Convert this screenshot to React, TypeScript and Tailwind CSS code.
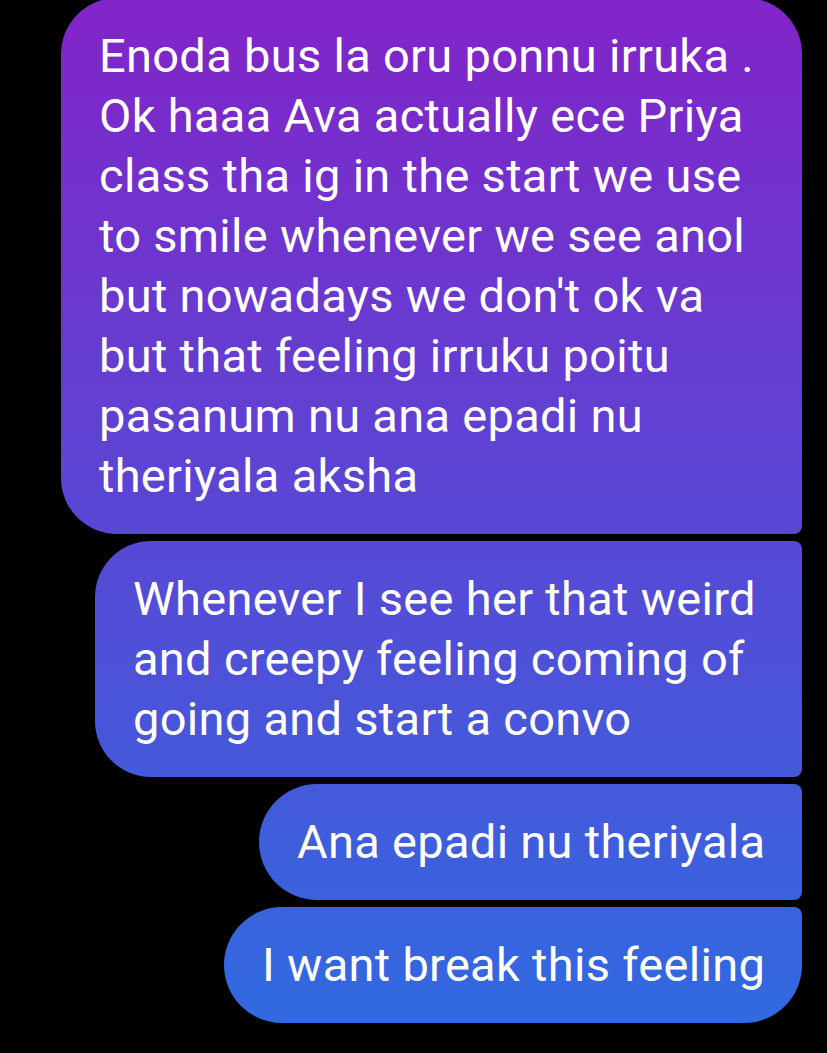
import React from 'react';

interface Bubble {
  lines: string[];
  width: string;
  corners: string;
}

const bubbles: Bubble[] = [
  {
    lines: [
      "Enoda bus la oru ponnu irruka .",
      "Ok haaa Ava actually ece Priya",
      "class tha ig in the start we use",
      "to smile whenever we see anol",
      "but nowadays we don't ok va",
      "but that feeling irruku poitu",
      "pasanum nu ana epadi nu",
      "theriyala aksha",
    ],
    width: "w-[741px]",
    corners: "rounded-tl-[56px] rounded-tr-[56px] rounded-bl-[56px] rounded-br-[8px]",
  },
  {
    lines: [
      "Whenever I see her that weird",
      "and creepy feeling coming of",
      "going and start a convo",
    ],
    width: "w-[707px]",
    corners: "rounded-tl-[56px] rounded-bl-[56px] rounded-tr-[8px] rounded-br-[8px]",
  },
  {
    lines: ["Ana epadi nu theriyala"],
    width: "w-[543px]",
    corners: "rounded-tl-[58px] rounded-bl-[58px] rounded-tr-[8px] rounded-br-[8px]",
  },
  {
    lines: ["I want break this feeling"],
    width: "w-[578px]",
    corners: "rounded-tl-[58px] rounded-bl-[58px] rounded-tr-[8px] rounded-br-[58px]",
  },
];

const App: React.FC = () => {
  return (
    <div className="h-[1053px] w-full overflow-hidden bg-black font-['Roboto',sans-serif]">
      <div className="-mt-[2px] flex flex-col items-end gap-[7px] pr-[25px]">
        {bubbles.map((b, i) => (
          <div
            key={i}
            className={`${b.width} ${b.corners} bg-[linear-gradient(to_bottom,#8224c8,#2e6ce1)] bg-fixed py-[28px] pl-[38px] text-[47px] leading-[60px] tracking-[0.3px] text-white`}
          >
            {b.lines.map((l, j) => (
              <div key={j} className="whitespace-nowrap">{l}</div>
            ))}
          </div>
        ))}
      </div>
    </div>
  );
};

export default App;
